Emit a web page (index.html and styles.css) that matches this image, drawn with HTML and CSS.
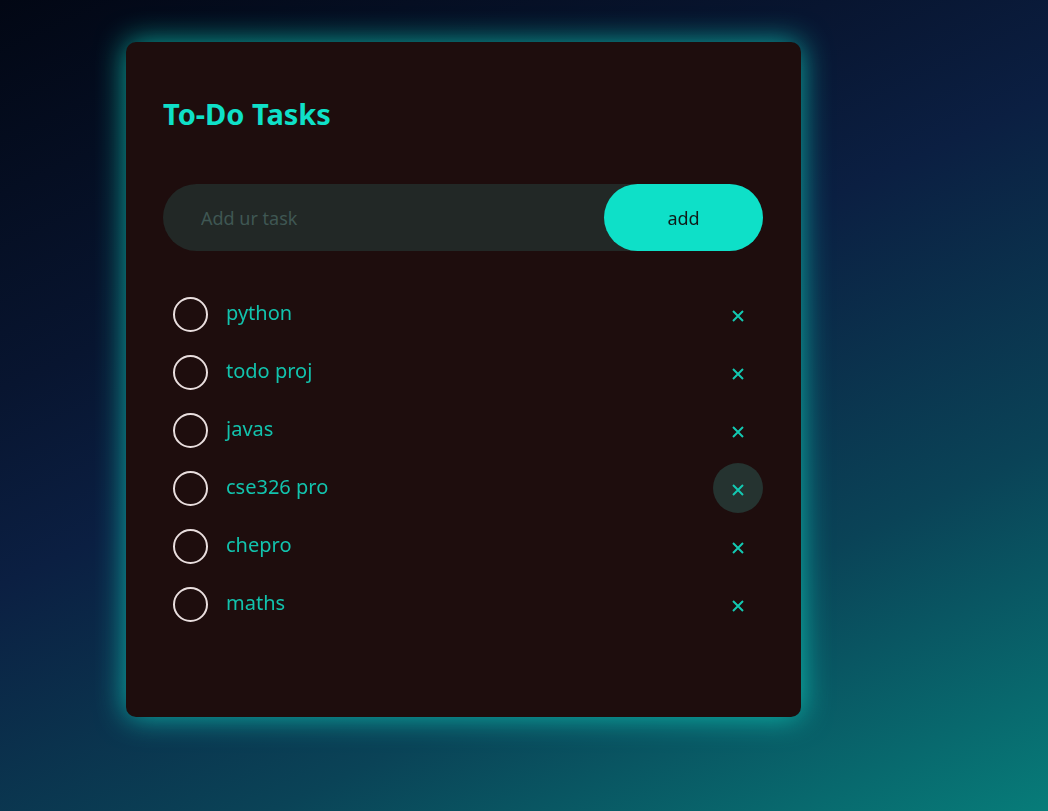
FILE: index.html
```html
<!DOCTYPE html>
<html>
<head>
<meta charset="utf-8">
<link rel="stylesheet" href="styles.css">
</head>
<body>
<div class="page">
  <div class="card">
    <h2 class="title">To-Do Tasks</h2>
    <div class="add-row">
      <input class="task-input" type="text" placeholder="Add ur task" autofocus>
      <button class="add-btn">add</button>
    </div>
    <ul class="list">
      <li class="item"><span class="check"></span><span class="label">python</span><span class="del"><svg width="12" height="12" viewBox="0 0 12 12"><path d="M1 1L11 11M11 1L1 11" stroke="#13c9b2" stroke-width="2"/></svg></span></li>
      <li class="item"><span class="check"></span><span class="label">todo proj</span><span class="del"><svg width="12" height="12" viewBox="0 0 12 12"><path d="M1 1L11 11M11 1L1 11" stroke="#13c9b2" stroke-width="2"/></svg></span></li>
      <li class="item"><span class="check"></span><span class="label">javas</span><span class="del"><svg width="12" height="12" viewBox="0 0 12 12"><path d="M1 1L11 11M11 1L1 11" stroke="#13c9b2" stroke-width="2"/></svg></span></li>
      <li class="item"><span class="check"></span><span class="label">cse326 pro</span><span class="del hover"><svg width="12" height="12" viewBox="0 0 12 12"><path d="M1 1L11 11M11 1L1 11" stroke="#13c9b2" stroke-width="2"/></svg></span></li>
      <li class="item"><span class="check"></span><span class="label">chepro</span><span class="del"><svg width="12" height="12" viewBox="0 0 12 12"><path d="M1 1L11 11M11 1L1 11" stroke="#13c9b2" stroke-width="2"/></svg></span></li>
      <li class="item"><span class="check"></span><span class="label">maths</span><span class="del"><svg width="12" height="12" viewBox="0 0 12 12"><path d="M1 1L11 11M11 1L1 11" stroke="#13c9b2" stroke-width="2"/></svg></span></li>
    </ul>
  </div>
</div>
</body>
</html>
```

FILE: styles.css
```css
* { box-sizing: border-box; }
html, body { margin: 0; padding: 0; }
body {
  width: 1048px;
  height: 811px;
  overflow: hidden;
  font-family: "Noto Sans", "Open Sans", sans-serif;
  background: linear-gradient(155deg, #020714 0%, #081530 30%, #0b1f42 45%, #0a4357 72%, #077c79 100%);
}
.page {
  padding: 42px 0 0 126px;
}
.card {
  width: 675px;
  height: 675px;
  background: #1e0d0d;
  border-radius: 10px;
  padding: 40px 38px 0 37px;
  box-shadow: 0 0 30px rgba(14, 224, 200, 0.75);
}
.title {
  margin: 0;
  font-size: 29px;
  line-height: 64px;
  font-weight: 700;
  color: #0fe0c8;
}
.add-row {
  margin-top: 38px;
  display: flex;
  height: 67px;
  background: #222826;
  border-radius: 34px;
}
.task-input {
  flex: 1;
  min-width: 0;
  border: none;
  outline: none;
  background: transparent;
  padding: 0 0 0 38px;
  font-family: inherit;
  font-size: 18px;
  color: #cfe;
  caret-color: #13c9b2;
}
.task-input::placeholder { color: #3f5753; }
.add-btn {
  width: 159px;
  height: 67px;
  border: none;
  border-radius: 34px;
  background: #0ee0c8;
  color: #0f1b19;
  font-family: inherit;
  font-size: 18px;
  padding: 0;
}
.list {
  list-style: none;
  margin: 34px 0 0;
  padding: 0;
}
.item {
  height: 58px;
  display: flex;
  align-items: center;
  padding-left: 10px;
}
.check {
  width: 35px;
  height: 35px;
  border: 2.5px solid #e9dede;
  border-radius: 50%;
  flex: none;
}
.label {
  flex: 1;
  margin-left: 18px;
  font-size: 20px;
  color: #12c3ad;
  margin-top: -4px;
}
.del {
  width: 50px;
  height: 50px;
  border-radius: 50%;
  display: flex;
  align-items: center;
  justify-content: center;
  padding-top: 4px;
}
.del.hover { background: #253330; }
```
